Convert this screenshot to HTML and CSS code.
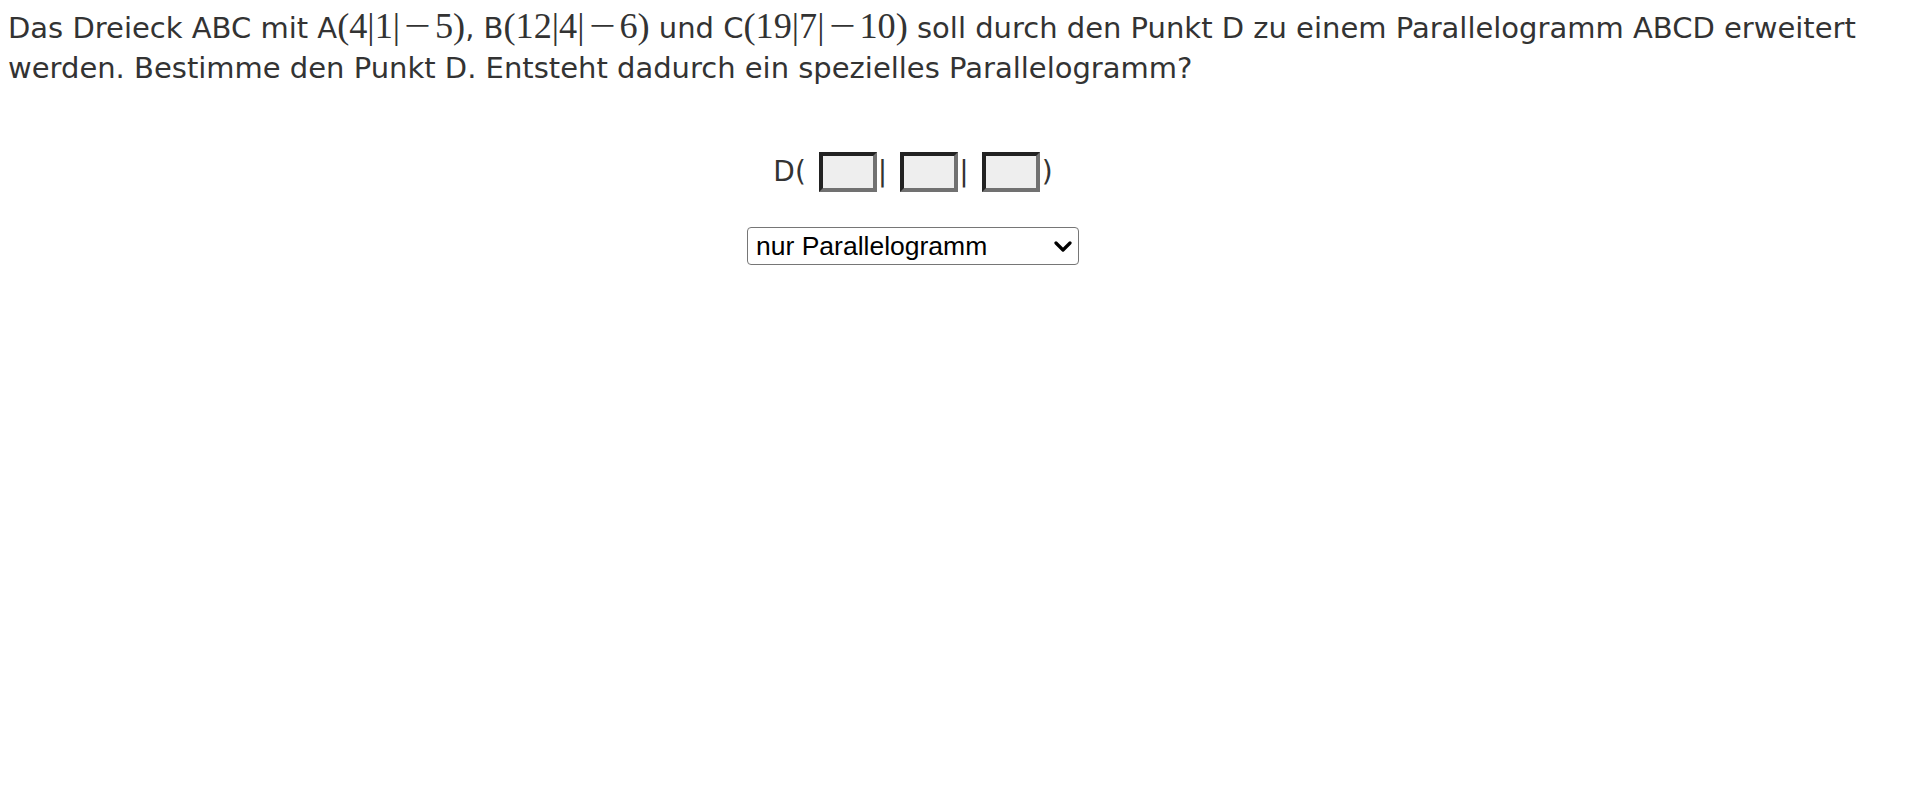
FILE: index.html
```html
<!DOCTYPE html>
<html lang="de">
<head>
<meta charset="utf-8">
<title>Parallelogramm</title>
<link rel="stylesheet" href="styles.css">
</head>
<body>
<p class="task">Das Dreieck ABC mit A<span class="m">(4|1|<span class="op">−</span>5)</span>, B<span class="m">(12|4|<span class="op">−</span>6)</span> und C<span class="m">(19|7|<span class="op">−</span>10)</span> soll durch den Punkt D zu einem Parallelogramm ABCD erweitert werden. Bestimme den Punkt D. Entsteht dadurch ein spezielles Parallelogramm?</p>
<div class="answer">
  <div class="point">
    <span class="lbl">D(</span>
    <input class="coord first" type="text">
    <span class="sep">|</span>
    <input class="coord" type="text">
    <span class="sep">|</span>
    <input class="coord" type="text">
    <span class="close">)</span>
  </div>
  <div class="select-wrap">
    <select class="choice">
      <option>nur Parallelogramm</option>
      <option>Rechteck</option>
      <option>Raute</option>
      <option>Quadrat</option>
    </select>
    <svg class="chev" width="18" height="11" viewBox="0 0 18 11"><path d="M2 2 L9 9 L16 2" fill="none" stroke="#000" stroke-width="3.2" stroke-linecap="round" stroke-linejoin="round"/></svg>
  </div>
</div>
</body>
</html>
```
FILE: styles.css
```css
html, body {
  background: #fff;
}
body {
  margin: 8px;
  font-family: "DejaVu Sans", Verdana, sans-serif;
  font-size: 29px;
  color: #333;
}
.task {
  margin: 0;
  line-height: 40px;
}
.m {
  font-family: "Liberation Serif", "Times New Roman", serif;
  font-size: 1.25em;
  line-height: 1;
}
.op {
  display: inline-block;
  transform: scaleX(1.3);
  margin: 0 0.2em;
}
.answer {
  margin-top: 64px;
  padding-right: 94px;
  display: flex;
  flex-direction: column;
  align-items: center;
  font-size: 28px;
}
.point {
  display: flex;
  align-items: center;
  height: 40px;
  line-height: 40px;
}
.coord {
  box-sizing: border-box;
  width: 58px;
  height: 40px;
  margin: 0;
  padding: 0;
  background: #eeeeee;
  border-style: solid;
  border-width: 4px;
  border-color: #222 #717171 #717171 #222;
  font-size: 20px;
}
.coord.first {
  margin-left: 13px;
}
.sep {
  margin-left: 1px;
  margin-right: 13px;
}
.close {
  margin-left: 2px;
}
.select-wrap {
  position: relative;
  margin-top: 35px;
}
.choice {
  box-sizing: border-box;
  width: 332px;
  height: 38px;
  margin: 0;
  padding: 0 0 0 8px;
  appearance: none;
  -webkit-appearance: none;
  background: #fff;
  border: 1px solid #767676;
  border-radius: 4px;
  font-family: "Liberation Sans", Arial, sans-serif;
  font-size: 26.5px;
  color: #000;
}
.chev {
  position: absolute;
  right: 7px;
  top: 14px;
  pointer-events: none;
}
```
